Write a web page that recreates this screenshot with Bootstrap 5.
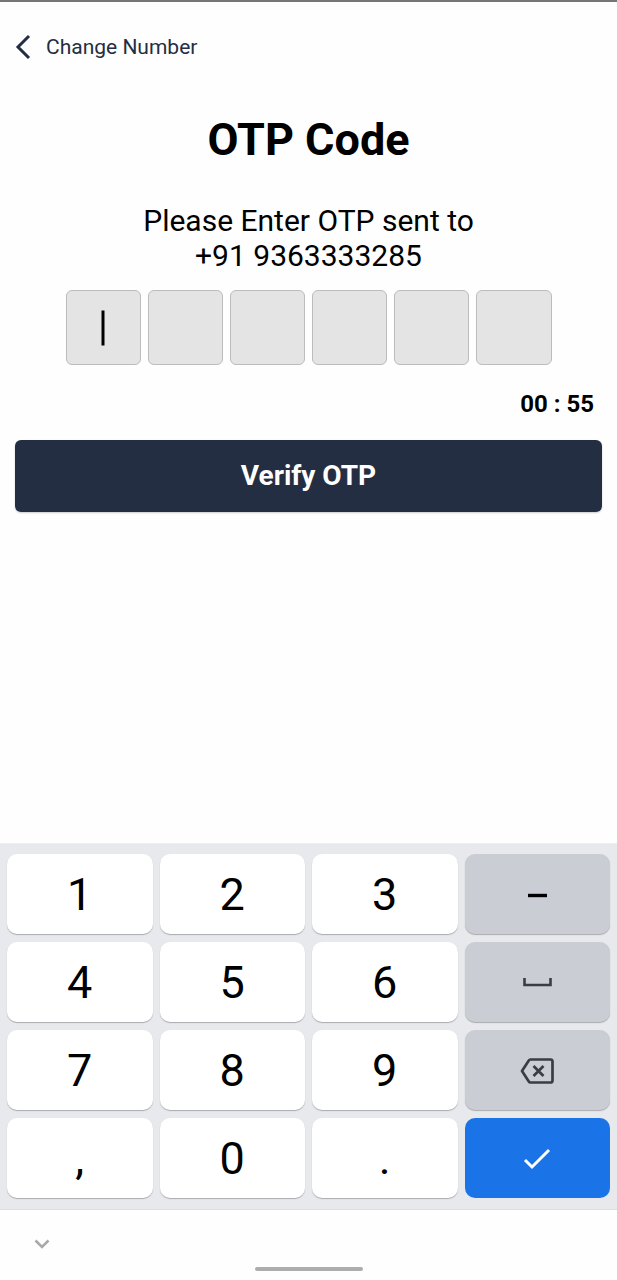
<!DOCTYPE html>
<html lang="en">
<head>
<meta charset="utf-8">
<meta name="viewport" content="width=device-width, initial-scale=1">
<title>OTP Code</title>
<link href="https://cdn.jsdelivr.net/npm/bootstrap@5.3.0/dist/css/bootstrap.min.css" rel="stylesheet">
<style>
  body { font-family: Roboto, "Liberation Sans", sans-serif; color: #000; background: #fefefe; }
  .screen { border-top: 2px solid #757575; }
  .back-link { color: #232e42; font-size: 21px; line-height: 24px; gap: 15px; padding: 32px 15px 0; }
  .page-title { font-size: 45px; line-height: 54px; font-weight: 700; margin-top: 53px; }
  .prompt { font-size: 30px; line-height: 35px; margin: 36px 0 17px; }
  .otp-row { max-width: 486px; gap: 7px; }
  .otp-cell { flex: 1 1 0; min-width: 0; }
  .otp-box { height: 75px; padding: 0; font-size: 32px; background: #e4e4e4; border: 1px solid #bcbcbc; border-radius: 6px; }
  .caret-bar { width: 3px; height: 35px; background: #000; pointer-events: none; }
  .timer { font-size: 24px; line-height: 28px; font-weight: 700; padding: 25px 23px 0; }
  .verify-wrap { padding: 22px 15px 0; }
  .btn-verify, .btn-verify:hover { height: 72px; font-size: 28px; font-weight: 700; color: #fff; background: #232e42; border: 0; border-radius: 6px; box-shadow: 0 1px 2px #0003; }
  .keypad { display: grid; grid-template-columns: repeat(4, 1fr); column-gap: 7px; row-gap: 8px; padding: 10px 7px 11px; background: #e8e9ed; border-top: 1px solid #eeeff2; border-bottom: 1px solid #dcdde0; }
  .key { height: 80px; padding: 2px 0 0; border: 0; border-radius: 10px; background: #fff; color: #000; font-size: 45px; line-height: 78px; box-shadow: 0 1px 1px #a9abae; }
  .key-side { background: #cbcdd5; color: #3c3d42; }
  .key-done { background: #1b73e8; color: #fff; box-shadow: none; }
  .system-bar { height: 70px; }
  .hide-btn { left: 34px; top: 28px; line-height: 0; color: #a9a9a9; }
  .home-pill { width: 108px; height: 4px; background: #adadad; margin-bottom: 9px; }
</style>
</head>
<body>
<div class="screen d-flex flex-column min-vh-100">
  <header class="d-flex">
    <a href="#" class="back-link d-flex align-items-center text-decoration-none">
      <svg width="16" height="26" viewBox="0 0 16 26" fill="none" stroke="currentColor" stroke-width="3" aria-hidden="true"><path d="M14 2 3 13l11 11"/></svg>
      <span>Change Number</span>
    </a>
  </header>
  <main>
    <h1 class="page-title text-center mb-0">OTP Code</h1>
    <p class="prompt text-center">Please Enter OTP sent to<br>+91 9363333285</p>
    <form>
      <div class="otp-row d-flex mx-auto">
        <div class="otp-cell position-relative">
          <input class="otp-box w-100 d-block text-center" type="text" inputmode="numeric" maxlength="1" aria-label="Digit 1">
          <span class="caret-bar position-absolute top-50 start-50 translate-middle"></span>
        </div>
        <div class="otp-cell"><input class="otp-box w-100 d-block text-center" type="text" inputmode="numeric" maxlength="1" aria-label="Digit 2"></div>
        <div class="otp-cell"><input class="otp-box w-100 d-block text-center" type="text" inputmode="numeric" maxlength="1" aria-label="Digit 3"></div>
        <div class="otp-cell"><input class="otp-box w-100 d-block text-center" type="text" inputmode="numeric" maxlength="1" aria-label="Digit 4"></div>
        <div class="otp-cell"><input class="otp-box w-100 d-block text-center" type="text" inputmode="numeric" maxlength="1" aria-label="Digit 5"></div>
        <div class="otp-cell"><input class="otp-box w-100 d-block text-center" type="text" inputmode="numeric" maxlength="1" aria-label="Digit 6"></div>
      </div>
      <div class="timer text-end">00 : 55</div>
      <div class="verify-wrap"><button type="button" class="btn btn-verify w-100">Verify OTP</button></div>
    </form>
  </main>
  <section class="keypad mt-auto" aria-label="Keypad">
    <button type="button" class="key">1</button>
    <button type="button" class="key">2</button>
    <button type="button" class="key">3</button>
    <button type="button" class="key key-side" aria-label="Minus"><svg class="d-block mx-auto" width="32" height="32" viewBox="0 0 32 32" aria-hidden="true"><path d="M7 16.500h19" stroke="#000" stroke-width="3.400"/></svg></button>
    <button type="button" class="key">4</button>
    <button type="button" class="key">5</button>
    <button type="button" class="key">6</button>
    <button type="button" class="key key-side" aria-label="Space"><svg class="d-block mx-auto" width="32" height="32" viewBox="0 0 32 32" fill="none" stroke="currentColor" stroke-width="2.600" aria-hidden="true"><path d="M3.500 11v7h26v-7"/></svg></button>
    <button type="button" class="key">7</button>
    <button type="button" class="key">8</button>
    <button type="button" class="key">9</button>
    <button type="button" class="key key-side" aria-label="Backspace"><svg class="d-block mx-auto" width="34" height="28" viewBox="0 0 34 28" fill="none" stroke="currentColor" stroke-width="2.700" stroke-linejoin="round" aria-hidden="true"><path d="M10.500 2.500H30.500a2 2 0 0 1 2 2v19a2 2 0 0 1-2 2H10.500a2 2 0 0 1-1.700-1L2 14l6.800-10.500a2 2 0 0 1 1.700-1z"/><path d="m13.500 9 10 10m0-10-10 10"/></svg></button>
    <button type="button" class="key">,</button>
    <button type="button" class="key">0</button>
    <button type="button" class="key">.</button>
    <button type="button" class="key key-done" aria-label="Done"><svg class="d-block mx-auto" width="28" height="22" viewBox="0 0 28 22" fill="none" stroke="currentColor" stroke-width="3" aria-hidden="true"><path d="m2 12 7 7L26 2"/></svg></button>
  </section>
  <footer class="system-bar position-relative d-flex justify-content-center align-items-end">
    <button type="button" class="hide-btn btn p-0 border-0 position-absolute" aria-label="Hide keyboard"><svg width="16" height="12" viewBox="0 0 16 12" fill="none" stroke="currentColor" stroke-width="2.500" aria-hidden="true"><path d="m1.500 2.500 6.500 6.500 6.500-6.500"/></svg></button>
    <div class="home-pill rounded-pill"></div>
  </footer>
</div>
<script src="https://cdn.jsdelivr.net/npm/bootstrap@5.3.0/dist/js/bootstrap.bundle.min.js"></script>
</body>
</html>
